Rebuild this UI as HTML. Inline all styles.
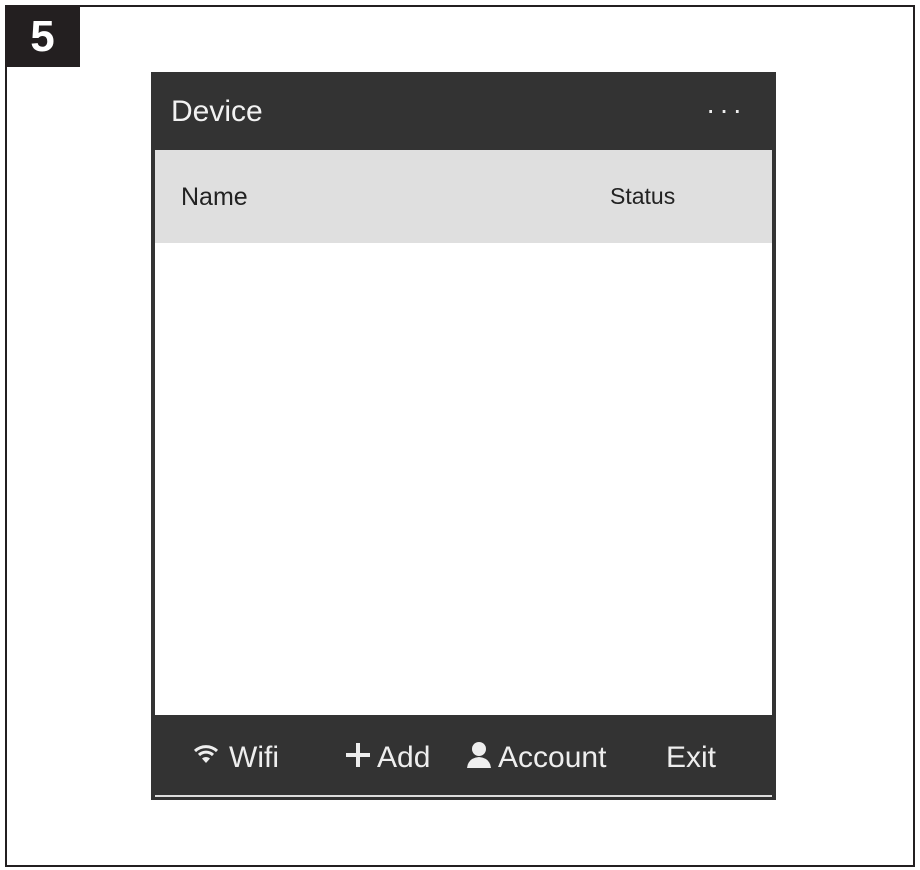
<!DOCTYPE html>
<html><head><style>
body{margin:0;width:920px;height:870px;background:#fff;position:relative;overflow:hidden;font-family:"Liberation Sans",sans-serif}
.frame{position:absolute;left:5px;top:5px;width:906px;height:858px;border:2px solid #231f20}
.lab{position:absolute;left:5px;top:5px;width:75px;height:62px;background:#231f20;color:#fff;font-weight:bold;font-size:44px;text-align:center;line-height:64px}
.ph{position:absolute;left:151px;top:72px;width:625px;height:728px;background:#333}
.hd{position:absolute;left:20px;top:23px;color:#f2f2f2;font-size:30px}
.dots{position:absolute;right:30px;top:22px;color:#eee;font-size:28px;letter-spacing:4px}
.gr{position:absolute;left:4px;top:78px;width:617px;height:93px;background:#dfdfdf}
.gr span{position:absolute;top:33px;font-size:25px;color:#222}
.wh{position:absolute;left:4px;top:171px;width:617px;height:472px;background:#fff}
.bar{position:absolute;left:4px;top:643px;width:617px;height:80px;background:#333;border-bottom:2px solid #ddd;color:#eee;font-size:30px}
.bar span{position:absolute;top:26px}
</style></head><body>
<div class="frame"></div>
<div class="lab">5</div>
<div class="ph">
<div class="hd">Device</div><div class="dots">···</div>
<div class="gr"><span style="left:26px">Name</span><span style="left:455px;font-size:23px">Status</span></div>
<div class="wh"></div>
<div class="bar">
<svg style="position:absolute;left:38px;top:28px" width="26" height="22" viewBox="0 0 26 22"><path d="M2 8a16 16 0 0 1 22 0M6 12a10 10 0 0 1 14 0" stroke="#eee" stroke-width="3" fill="none"/><path d="M9 15.5a6 6 0 0 1 8 0L13 20z" fill="#eee"/></svg>
<span style="left:74px">Wifi</span>
<svg style="position:absolute;left:190px;top:27px" width="26" height="26"><path d="M13 1v24M1 13h24" stroke="#eee" stroke-width="4"/></svg>
<span style="left:222px">Add</span>
<svg style="position:absolute;left:310px;top:26px" width="28" height="28" viewBox="0 0 28 28"><circle cx="14" cy="8" r="7" fill="#eee"/><path d="M2 27q1-10 12-11q11 1 12 11z" fill="#eee"/></svg>
<span style="left:343px">Account</span>
<span style="left:511px">Exit</span>
</div>
</div>
</body></html>
